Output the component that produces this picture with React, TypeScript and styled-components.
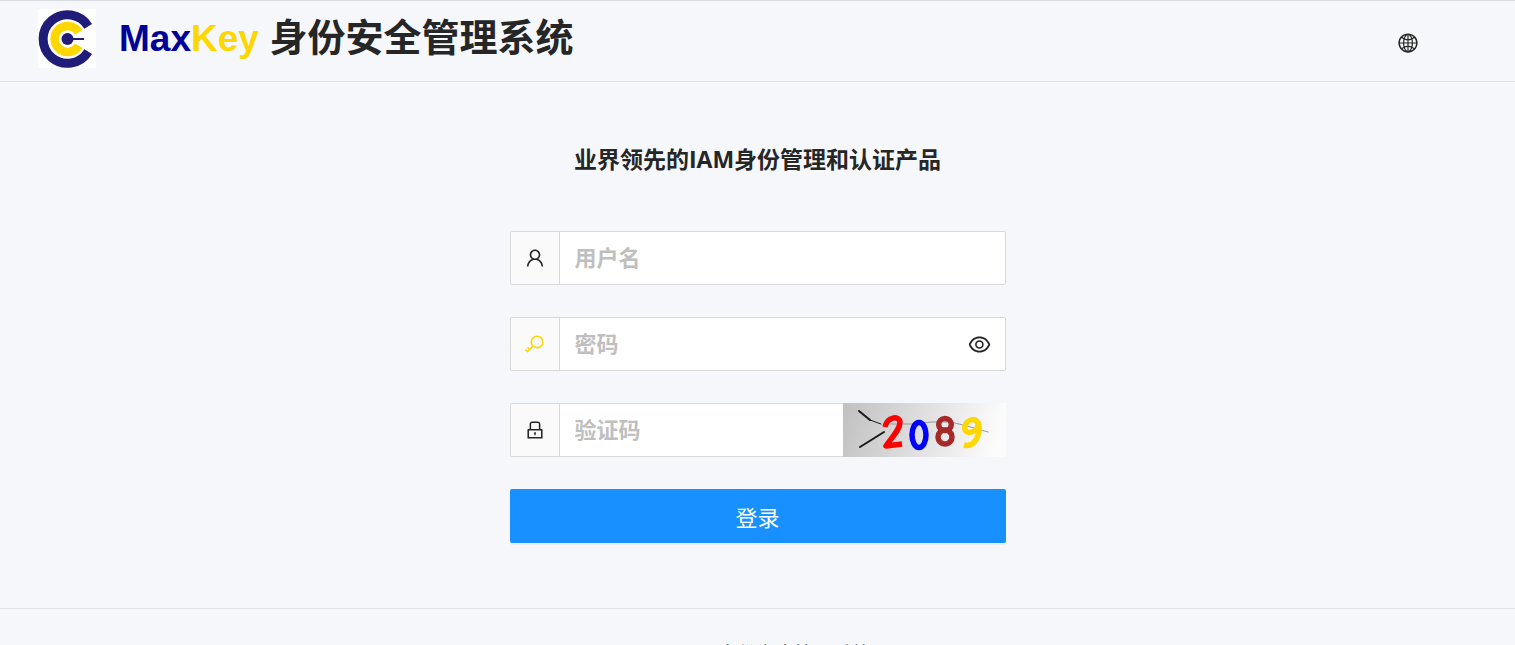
import React from "react";
import styled, { createGlobalStyle } from "styled-components";
import {
  AiOutlineEye,
  AiOutlineGlobal,
  AiOutlineKey,
  AiOutlineLock,
  AiOutlineUser,
} from "react-icons/ai";

const GlobalStyle = createGlobalStyle`
  *, *::before, *::after { box-sizing: border-box; }
  body {
    margin: 0;
    background: #f5f7fb;
    color: #262626;
    font-family: "Liberation Sans", "Noto Sans CJK SC", sans-serif;
    font-size: 22px;
  }
`;

const Page = styled.div`
  height: 100vh;
  overflow: hidden;
  display: flex;
  flex-direction: column;
  border-top: 1px solid #d9dbe0;
`;

const Header = styled.header`
  flex: none;
  display: flex;
  align-items: center;
  justify-content: space-between;
  height: 81px;
  padding: 3px 96px 0 38px;
  border-bottom: 1px solid #e2e4e8;
`;

const Brand = styled.div`
  display: flex;
  align-items: center;
  gap: 23px;
  padding-bottom: 8px;
`;

const Title = styled.h1`
  margin: 0;
  font-size: 38px;
  line-height: 56px;
  font-weight: 700;
  white-space: nowrap;
`;

const BrandWord = styled.span<{ $color: string }>`
  color: ${(p) => p.$color};
  font-size: 37px;
`;

const IconButton = styled.button<{ $size: number }>`
  display: flex;
  align-items: center;
  justify-content: center;
  padding: 0;
  border: 0;
  background: none;
  color: #262626;
  font-size: ${(p) => p.$size}px;
  cursor: pointer;
`;

const Main = styled.main`
  flex: none;
  display: flex;
  flex-direction: column;
  align-items: center;
  padding: 59px 16px 65px;
`;

const Slogan = styled.h2`
  margin: 0 0 54px;
  font-family: "Open Sans", "Noto Sans CJK SC", sans-serif;
  font-size: 23px;
  line-height: 36px;
  font-weight: 700;
`;

const Form = styled.form`
  display: flex;
  flex-direction: column;
  gap: 32px;
  width: 100%;
  max-width: 496px;
`;

const Row = styled.div`
  display: flex;
  height: 54px;
`;

const Field = styled.div`
  flex: 1;
  min-width: 0;
  display: flex;
  border: 1px solid #d9d9d9;
  border-radius: 2px;
  background: #fff;
  overflow: hidden;
`;

const CodeField = styled(Field)`
  border-right: 0;
  border-radius: 2px 0 0 2px;
`;

const Addon = styled.label<{ $color?: string }>`
  flex: none;
  display: flex;
  align-items: center;
  justify-content: center;
  width: 49px;
  border-right: 1px solid #d9d9d9;
  background: #fafafa;
  color: ${(p) => p.$color ?? "#262626"};
  font-size: 22px;
`;

const Input = styled.input`
  flex: 1;
  min-width: 0;
  padding: 2px 15px 0;
  border: 0;
  outline: 0;
  background: transparent;
  color: #262626;
  font: inherit;
  font-weight: 700;
  &::placeholder {
    color: #bfbfbf;
    opacity: 1;
  }
`;

const Reveal = styled(IconButton)`
  flex: none;
  width: 50px;
`;

const Captcha = styled.svg`
  flex: none;
  display: block;
  width: 163px;
  height: 54px;
`;

const Submit = styled.button`
  height: 54px;
  padding: 0;
  border: 0;
  border-radius: 2px;
  background: #1890ff;
  box-shadow: 0 2px 0 rgba(0, 0, 0, 0.04);
  color: #fff;
  font: inherit;
  cursor: pointer;
`;

const Footer = styled.footer`
  flex: none;
  padding: 31px 16px;
  border-top: 1px solid #e2e4e8;
  font-size: 19px;
  line-height: 30px;
  text-align: center;
`;

const Logo = () => (
  <svg width="58" height="59" viewBox="0 0 58 59" aria-hidden="true">
    <rect width="58" height="59" fill="#fff" />
    <path d="M50.2 17.4A24.3 24.3 0 1 0 50.2 42.6" fill="none" stroke="#201c78" strokeWidth="9" />
    <path d="M40.8 23.3A13 13 0 1 0 40.8 36.7" fill="none" stroke="#ffd700" strokeWidth="8.6" />
    <circle cx="29.5" cy="30" r="6" fill="#201c78" />
    <path d="M30 30H46" stroke="#201c78" strokeWidth="2" />
  </svg>
);

const CaptchaImage = () => (
  <Captcha viewBox="0 0 163 54" role="img" aria-label="2089">
    <defs>
      <linearGradient id="captcha-bg" x1="0" y1="0" x2="1" y2="0.1">
        <stop offset="0" stopColor="#c0c0c0" />
        <stop offset="1" stopColor="#fcfcfc" />
      </linearGradient>
    </defs>
    <rect width="163" height="54" fill="url(#captcha-bg)" />
    <g fill="none" stroke="#181818" strokeLinecap="round">
      <path d="M16 8L27 17" strokeWidth="2" />
      <path d="M27 17L38 21" strokeWidth="1" />
      <path d="M17 44L41 29" strokeWidth="2" />
      <path d="M48 21H70L88 19H108L124 23L145 29" stroke="#999" strokeWidth="1" />
    </g>
    <g fill="none" strokeWidth="5.5" strokeLinejoin="round">
      <path d="M42 24C44 14 56 12 57 19C57 27 48 35 43 43L59 41" stroke="#f00" />
      <ellipse cx="76" cy="32" rx="7" ry="12.5" stroke="#00f" />
      <ellipse cx="102" cy="21.5" rx="6.3" ry="6" stroke="#a52a2a" />
      <ellipse cx="102" cy="34" rx="7" ry="7" stroke="#a52a2a" />
      <path d="M135 23C136 14 124 15 122 23C120 32 132 31 135 23M135.500 19C138 31 132 45 121 42" stroke="#ffd700" />
    </g>
  </Captcha>
);

export default function App() {
  const [visible, setVisible] = React.useState(false);
  return (
    <>
      <GlobalStyle />
      <Page>
        <Header>
          <Brand>
            <Logo />
            <Title>
              <BrandWord $color="#000099">Max</BrandWord>
              <BrandWord $color="#ffd700">Key</BrandWord> 身份安全管理系统
            </Title>
          </Brand>
          <IconButton $size={22} type="button" aria-label="语言">
            <AiOutlineGlobal />
          </IconButton>
        </Header>
        <Main>
          <Slogan>业界领先的IAM身份管理和认证产品</Slogan>
          <Form onSubmit={(e) => e.preventDefault()}>
            <Row>
              <Field>
                <Addon htmlFor="username" aria-label="用户名">
                  <AiOutlineUser />
                </Addon>
                <Input id="username" type="text" placeholder="用户名" />
              </Field>
            </Row>
            <Row>
              <Field>
                <Addon htmlFor="password" aria-label="密码" $color="#ffd700">
                  <AiOutlineKey />
                </Addon>
                <Input id="password" type={visible ? "text" : "password"} placeholder="密码" />
                <Reveal
                  $size={25}
                  type="button"
                  aria-label="显示密码"
                  onClick={() => setVisible(!visible)}
                >
                  <AiOutlineEye />
                </Reveal>
              </Field>
            </Row>
            <Row>
              <CodeField>
                <Addon htmlFor="captcha" aria-label="验证码">
                  <AiOutlineLock />
                </Addon>
                <Input id="captcha" type="text" placeholder="验证码" />
              </CodeField>
              <CaptchaImage />
            </Row>
            <Submit type="submit">登录</Submit>
          </Form>
        </Main>
        <Footer>MaxKey 身份安全管理系统</Footer>
      </Page>
    </>
  );
}
